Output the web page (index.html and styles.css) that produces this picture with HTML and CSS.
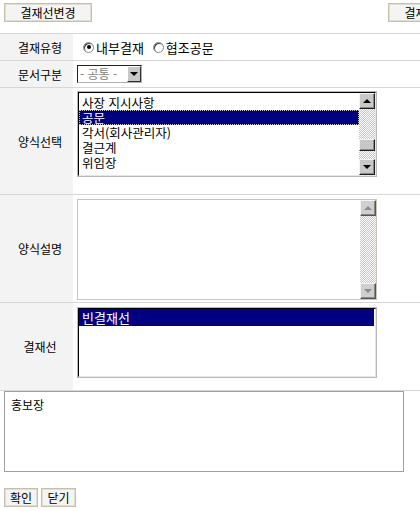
FILE: index.html
```html
<!DOCTYPE html>
<html lang="ko">
<head>
  <meta charset="UTF-8" />
  <title>결재 양식 선택</title>
  <link rel="stylesheet" href="styles.css">
</head>
<body>
  <div class="topbar">
    <button class="btn btn-wide">결재선변경</button>
    <button class="btn btn-wide">결재선저장</button>
  </div>

  <div class="form">
    <div class="row row-type">
      <div class="label">결재유형</div>
      <div class="field">
        <span class="radio checked"></span><span class="radio-text">내부결재</span>
        <span class="radio"></span><span class="radio-text">협조공문</span>
      </div>
    </div>
    <div class="row row-kind">
      <div class="label">문서구분</div>
      <div class="field">
        <div class="combo">
          <span class="combo-text">- 공통 -</span>
          <span class="combo-btn"><span class="arrow-down"></span></span>
        </div>
      </div>
    </div>
    <div class="row row-form">
      <div class="label">양식선택</div>
      <div class="field field-top">
        <div class="listbox">
          <div class="listbox-inner">
            <div class="options">
              <div class="option">사장 지시사항</div>
              <div class="option selected">공문</div>
              <div class="option">각서(회사관리자)</div>
              <div class="option">결근계</div>
              <div class="option">위임장</div>
            </div>
            <div class="scrollbar">
              <div class="sb-btn"><span class="arrow-up"></span></div>
              <div class="sb-track"><div class="sb-thumb"></div></div>
              <div class="sb-btn"><span class="arrow-down"></span></div>
            </div>
          </div>
        </div>
      </div>
    </div>
    <div class="row row-desc">
      <div class="label">양식설명</div>
      <div class="field field-top">
        <div class="descbox">
          <div class="desc-text"></div>
          <div class="scrollbar">
            <div class="sb-btn disabled"><span class="arrow-up"></span></div>
            <div class="sb-track"></div>
            <div class="sb-btn disabled"><span class="arrow-down"></span></div>
          </div>
        </div>
      </div>
    </div>
    <div class="row row-line">
      <div class="label">결재선</div>
      <div class="field field-top">
        <div class="listbox linebox">
          <div class="listbox-inner">
            <div class="options">
              <div class="option selected plain">빈결재선</div>
            </div>
          </div>
        </div>
      </div>
    </div>
  </div>

  <textarea class="memo">홍보장</textarea>

  <div class="actions">
    <button class="btn btn-ok">확인</button>
    <button class="btn btn-close">닫기</button>
  </div>
</body>
</html>
```

FILE: styles.css
```css
html, body {
  overflow: hidden;
}
body {
  margin: 0;
  font-family: "Noto Sans CJK KR", "Noto Sans", sans-serif;
  font-size: 12px;
  color: #000;
  background: #fff;
}

/* buttons */
.btn {
  box-sizing: border-box;
  height: 19px;
  padding: 0;
  margin: 0;
  font-family: inherit;
  font-size: 12px;
  line-height: 15px;
  color: #000;
  background: #f4f4f4;
  border: 1px solid #c6c0aa;
  box-shadow: inset 0 0 0 1px #e2ded2;
}
.btn-wide { width: 88px; }
.btn-ok { width: 34px; }
.btn-close { width: 35px; }

.topbar {
  display: flex;
  justify-content: space-between;
  width: 472px;
  padding: 3px 4px 0;
}

/* form table */
.form {
  width: 640px;
  margin-top: 11px;
  border-top: 1px solid #d6d6d6;
}
.row {
  display: grid;
  grid-template-columns: 73px 1fr;
  border-bottom: 1px solid #d6d6d6;
}
.row-type, .row-kind { height: 26px; }
.row-form { height: 106px; }
.row-desc { height: 107px; }
.row-line { height: 87px; }
.label {
  display: flex;
  align-items: center;
  justify-content: center;
  padding-left: 7px;
  background: #f3f3f3;
  font-size: 12px;
}
.field {
  display: flex;
  align-items: center;
  padding-left: 4px;
}
.field-top { align-items: flex-start; }
.row-form .field { padding-top: 3px; }
.row-desc .field { padding-top: 4px; }
.row-line .field { padding-top: 4px; }

/* radio */
.radio {
  box-sizing: border-box;
  width: 11px;
  height: 11px;
  margin: 0 2px 0 6px;
  border-radius: 50%;
  border: 1px solid #8a8a8a;
  background: #fff;
  box-shadow: inset 1px 1px 0 #404040;
  display: flex;
  align-items: center;
  justify-content: center;
}
.radio.checked::after {
  content: "";
  width: 4px;
  height: 4px;
  border-radius: 50%;
  background: #000;
}
.radio-text {
  font-size: 13px;
  margin-right: 3px;
}

/* combo */
.combo {
  box-sizing: border-box;
  display: flex;
  align-items: center;
  width: 65px;
  height: 18px;
  border: 1px solid #b0b0b0;
  border-top-color: #202020;
  border-left-color: #202020;
  background: #fff;
}
.combo-text {
  flex: 1;
  font-size: 12px;
  line-height: 16px;
  padding-left: 2px;
  color: #808080;
  white-space: nowrap;
}
.combo-btn {
  box-sizing: border-box;
  width: 14px;
  height: 16px;
  display: flex;
  align-items: center;
  justify-content: center;
  background: #c8c8c8;
  border: 1px solid #fff;
  border-right-color: #303030;
  border-bottom-color: #303030;
}

/* arrows */
.arrow-down, .arrow-up {
  width: 0;
  height: 0;
  border-left: 4px solid transparent;
  border-right: 4px solid transparent;
}
.arrow-down { border-top: 4px solid #000; }
.arrow-up { border-bottom: 4px solid #000; }

/* listbox */
.listbox {
  box-sizing: border-box;
  width: 300px;
  height: 86px;
  border: 1px solid #b8b8b8;
  display: flex;
}
.listbox-inner {
  flex: 1;
  display: flex;
  overflow: hidden;
  border-top: 1px solid #000;
  border-left: 1px solid #000;
  border-right: 1px solid #e6e6e6;
  border-bottom: 1px solid #e6e6e6;
}
.options {
  flex: 1;
  overflow: hidden;
  padding-top: 2px;
}
.option {
  height: 15px;
  line-height: 15px;
  padding-left: 3px;
  font-size: 12.5px;
  white-space: nowrap;
}
.option.selected {
  background: #000080;
  color: #fff;
  outline: 1px dotted #c8c8c8;
  outline-offset: -1px;
}
.option.plain {
  outline: none;
  height: 17px;
  line-height: 17px;
  font-size: 13px;
}
.linebox { height: 71px; }
.linebox .options { padding-top: 0; padding-right: 1px; }

/* scrollbar */
.scrollbar {
  width: 16px;
  display: flex;
  flex-direction: column;
}
.sb-btn, .sb-thumb {
  box-sizing: border-box;
  height: 16px;
  display: flex;
  align-items: center;
  justify-content: center;
  background: #c8c8c8;
  border: 1px solid #f4f4f4;
  border-right-color: #202020;
  border-bottom-color: #202020;
  box-shadow: inset -1px -1px 0 #888;
}
.sb-thumb {
  height: 12px;
  margin-top: 30px;
}
.sb-track {
  flex: 1;
  background: repeating-conic-gradient(#c4c4c4 0 25%, #fff 0 50%) 0 0 / 2px 2px;
}
.sb-btn.disabled {
  background: #cfcfcf;
  border-right-color: #555;
  border-bottom-color: #555;
}
.sb-btn.disabled .arrow-up { border-bottom-color: #8c8c8c; }
.sb-btn.disabled .arrow-down { border-top-color: #8c8c8c; }

/* description box */
.descbox {
  box-sizing: border-box;
  width: 300px;
  height: 101px;
  display: flex;
  border: 1px solid #cbc6b2;
  background: #fff;
}
.desc-text { flex: 1; }

/* memo */
.memo {
  display: block;
  box-sizing: border-box;
  width: 400px;
  height: 81px;
  margin: 0 0 0 4px;
  padding: 5px 6px;
  border: 1px solid #a0a0a0;
  font-family: inherit;
  font-size: 12px;
  line-height: 16px;
  resize: none;
  overflow: hidden;
}

.actions {
  display: flex;
  gap: 3px;
  margin: 16px 0 0 4px;
}
```
